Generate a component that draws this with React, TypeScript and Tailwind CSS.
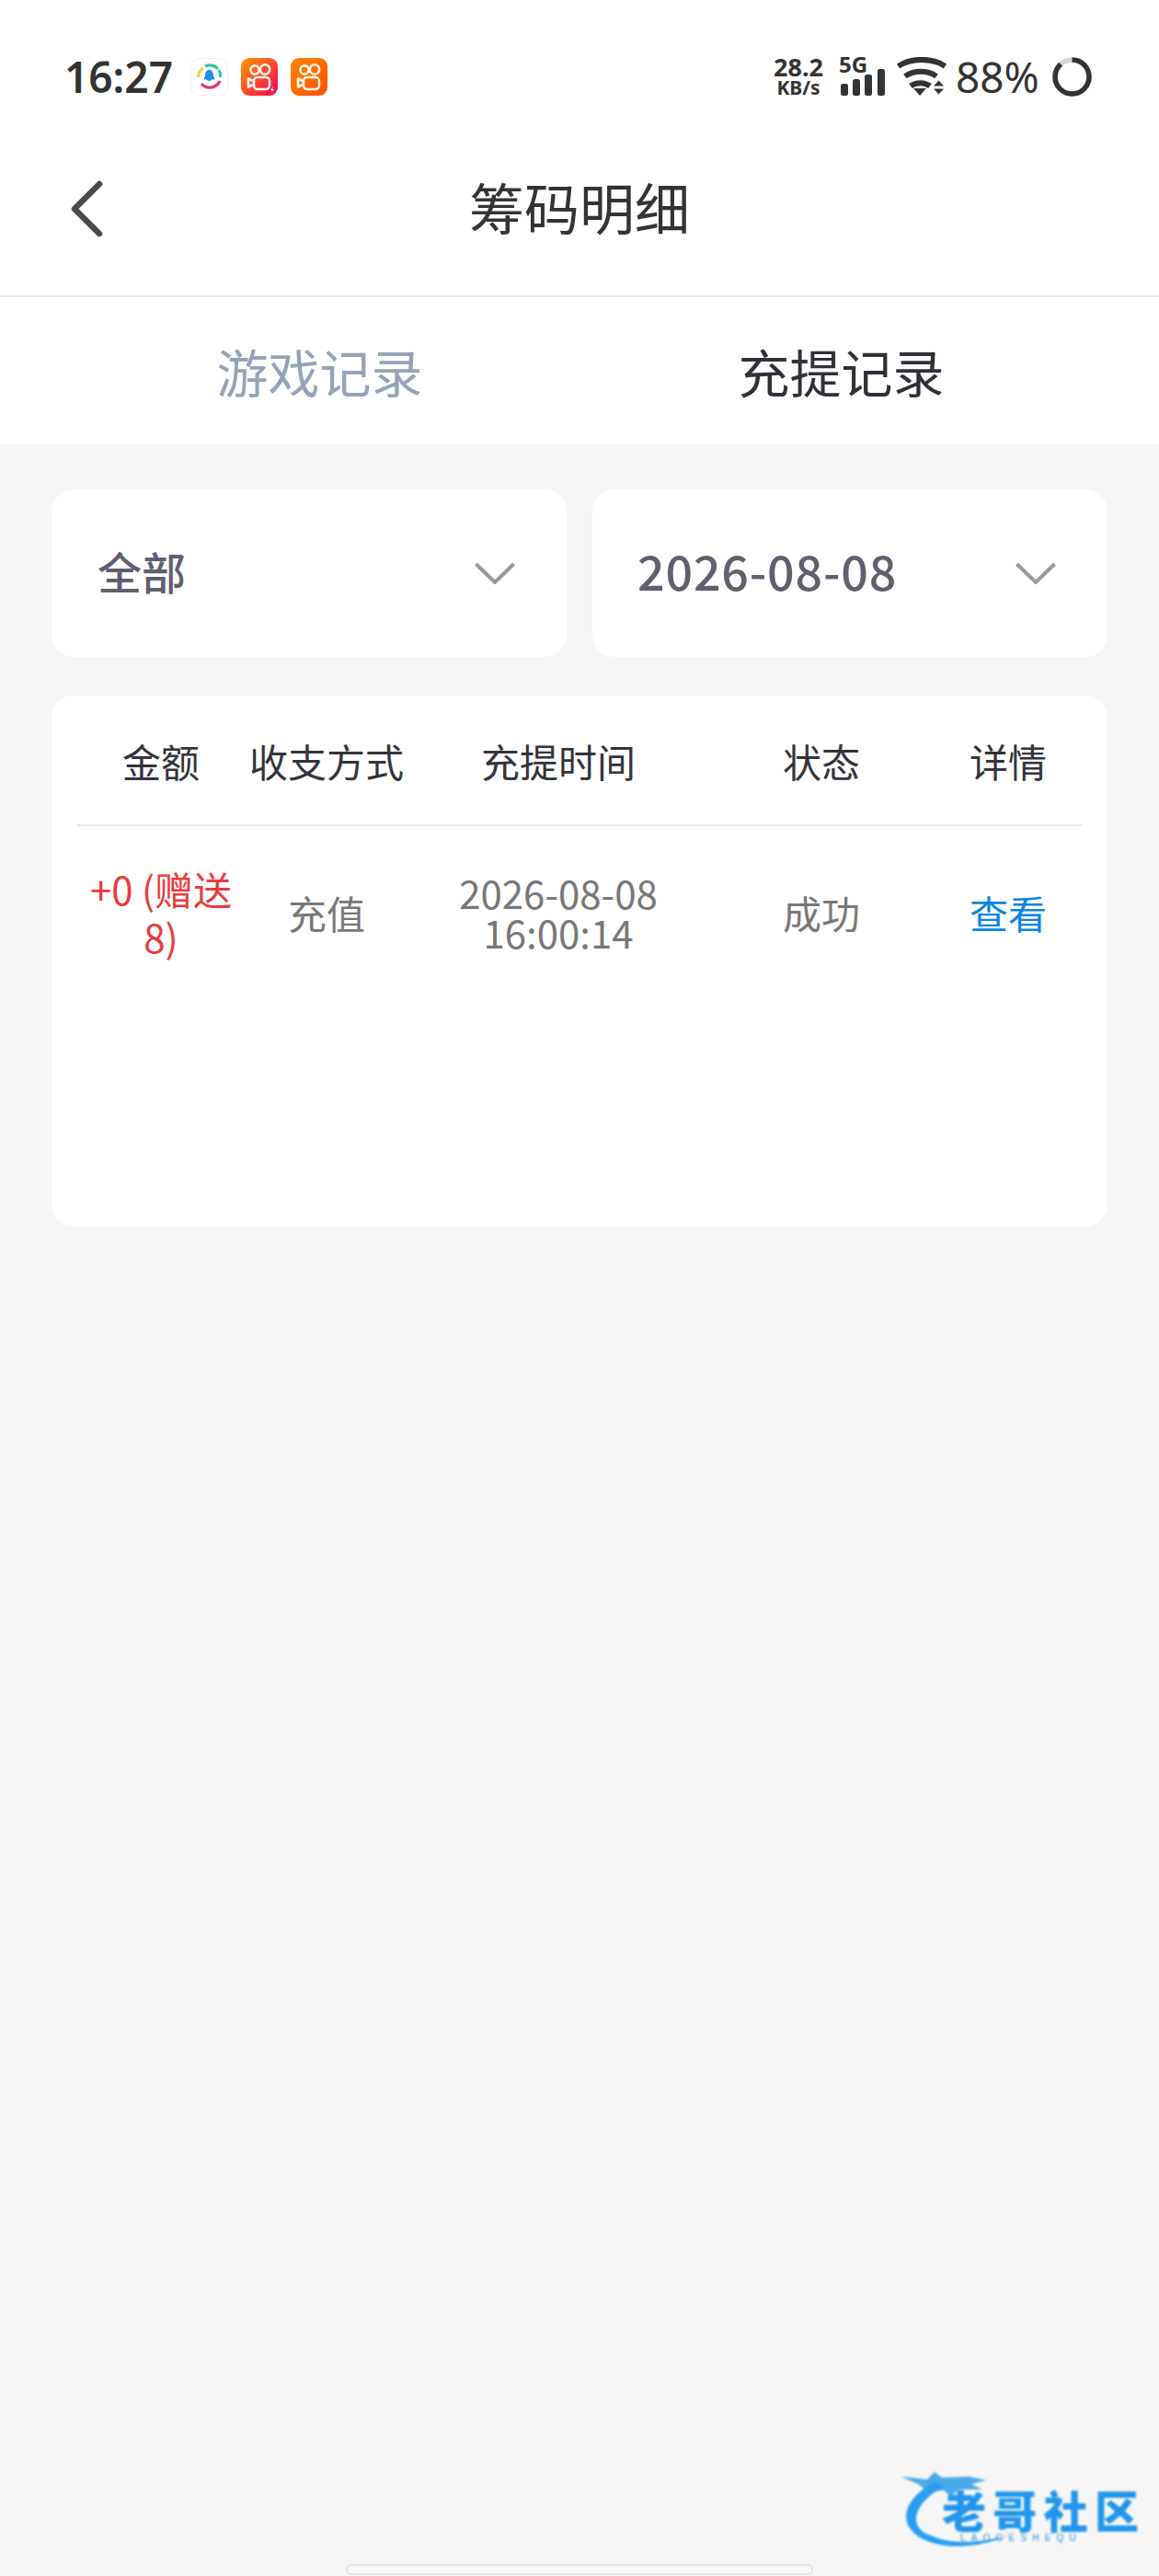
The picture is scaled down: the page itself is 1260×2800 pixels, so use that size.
const cjk = "font-['Noto_Sans_CJK_SC','Noto_Sans',sans-serif]";

function KuaishouIcon({ id, from, to, bolt }: { id: string; from: string; to: string; bolt?: boolean }) {
  return (
    <svg width="40" height="41" viewBox="0 0 40 41">
      <defs>
        <linearGradient id={id} x1="0" y1="0" x2="1" y2="1">
          <stop offset="0" stopColor={from} />
          <stop offset="1" stopColor={to} />
        </linearGradient>
      </defs>
      <rect width="40" height="41" rx="9" fill={`url(#${id})`} />
      <g fill="none" stroke="#fff6ea" strokeWidth="2.6">
        <circle cx="15" cy="13" r="4.6" />
        <circle cx="26" cy="12.5" r="5.2" />
        <rect x="14" y="21" width="17" height="13" rx="4" />
        <path d="M13 25l-5-2.5v9l5-2.5" strokeLinejoin="round" />
      </g>
      {bolt && <path d="M35 31l-3 4h2l-1 3 3-4h-2z" fill="#fff" />}
    </svg>
  );
}

function QQIcon() {
  return (
    <svg width="41" height="41" viewBox="0 0 41 41">
      <rect x="0.5" y="0.5" width="40" height="40" rx="9" fill="#fff" stroke="#f0f0f0" />
      <g fill="none" strokeWidth="3.2">
        <path d="M8.5 21a12 12 0 0 1 5.5-10" stroke="#f2cf4a" />
        <path d="M16 9a12 12 0 0 1 14 3" stroke="#33c4a8" />
        <path d="M31 13a12 12 0 0 1 1.5 8" stroke="#35c2c0" />
        <path d="M32 25a12 12 0 0 1-20 3" stroke="#e8366f" />
      </g>
      <path d="M20.5 13c3 0 4.400 2.500 4.400 5.500 0 1.500 1.600 3.500 1.300 5-.8.600-1.800-.5-2-.8-.4 1.200-2 2.300-3.700 2.300s-3.300-1.100-3.700-2.300c-.2.300-1.200 1.400-2 .8-.3-1.500 1.300-3.500 1.300-5 0-3 1.400-5.500 4.400-5.500z" fill="#1f8af0" />
    </svg>
  );
}

function SignalIcon() {
  return (
    <svg width="48" height="29" viewBox="0 0 48 29" fill="#333">
      <rect x="0" y="16" width="8" height="13" rx="2.500" />
      <rect x="13" y="11" width="8" height="18" rx="2.500" />
      <rect x="26" y="6" width="8" height="23" rx="2.500" />
      <rect x="40" y="0" width="8" height="29" rx="2.500" />
    </svg>
  );
}

function WifiIcon() {
  return (
    <svg width="54" height="42" viewBox="0 0 54 42">
      <g fill="none" stroke="#333" strokeWidth="6">
        <path d="M1.500 10C15 0.500 39 0.500 52.500 10" />
        <path d="M9 21C18 14 34 14 43 21" />
        <path d="M15 31.500C21 27 30 27 36 31.500" />
      </g>
      <path d="M18 34h14l-7 8z" fill="#333" />
      <path d="M40 31.500l5.500-6 5.500 6zM40 34.500h11l-5.500 6z" fill="#333" />
    </svg>
  );
}

function RingIcon() {
  return (
    <svg width="43" height="43" viewBox="0 0 43 43" fill="none" strokeWidth="5.500">
      <circle cx="21.500" cy="21.500" r="18.500" stroke="#d6d6d6" />
      <circle cx="21.500" cy="21.500" r="18.500" stroke="#333" strokeDasharray="102 116.300" transform="rotate(-90 21.500 21.500)" />
    </svg>
  );
}

function BackIcon() {
  return (
    <svg width="40" height="66" viewBox="0 0 40 66" fill="none" stroke="#4a4a4a" strokeWidth="6.500" strokeLinecap="round" strokeLinejoin="round">
      <path d="M33 6L6 33L33 60" />
    </svg>
  );
}

function SelectChevron() {
  return (
    <svg width="44" height="24" viewBox="0 0 44 24" fill="none" stroke="#999" strokeWidth="4">
      <path d="M1.500 2L22 22L42.500 2" />
    </svg>
  );
}

function Watermark() {
  return (
    <div className="absolute left-[978px] top-[2684px] w-[262px] h-[92px] blur-[0.8px]">
      <svg width="262" height="92" viewBox="0 0 262 92" className="absolute left-0 top-0">
        <path d="M38 14C6 30-8 62 30 78c26 10 60 6 88-6-30 8-62 10-84 0C8 64 14 36 50 18z" fill="#2a9ff0" />
        <path d="M2 8l28 3 8-8 8 6 30-1 18 4-16 4 12 6-26 0-8 8-8-7-18 1-10-8z" fill="#2c9ce8" opacity="0.85" />
      </svg>
      <div className={`absolute left-[46px] top-[18px] w-[214px] flex justify-between text-[48px] leading-[50px] font-black text-[#2196ec] ${cjk}`}>
        <span>老</span>
        <span>哥</span>
        <span>社</span>
        <span>区</span>
      </div>
      <div className="absolute left-[66px] top-[69px] font-['Liberation_Sans',sans-serif] text-[10px] leading-[12px] tracking-[6.200px] text-[#2b8fdc]">
        LAOGESHEQU
      </div>
    </div>
  );
}

export default function App() {
  return (
    <div className={`relative w-[1260px] h-[2800px] bg-[#f6f6f6] overflow-hidden ${cjk}`}>
      {/* Status bar + nav */}
      <div className="bg-white border-b-2 border-[#e8e8e8]">
        <div className="h-[166px] flex items-center justify-between pl-[70px] pr-[73px]">
          <div className="flex items-center">
            <span className="font-['Noto_Sans',sans-serif] text-[46px] font-semibold text-[#333] leading-none w-[137px]">16:27</span>
            <div className="flex items-center gap-[14px]">
              <QQIcon />
              <KuaishouIcon id="ks1" from="#ff9a00" to="#f5005a" bolt />
              <KuaishouIcon id="ks2" from="#ff8a00" to="#f94f00" />
            </div>
          </div>
          <div className="flex items-center">
            <div className="flex flex-col items-center font-['Noto_Sans',sans-serif] font-bold text-[#333] mr-[19px] w-[54px]">
              <span className="text-[27px] leading-[25px]">28.2</span>
              <span className="text-[21px] leading-[21px] whitespace-nowrap">KB/s</span>
            </div>
            <div className="flex flex-col items-start mr-[13px]">
              <span className="font-['Noto_Sans',sans-serif] font-bold text-[24px] leading-[16px] text-[#333] ml-[-2px] h-[13px]">5G</span>
              <SignalIcon />
            </div>
            <WifiIcon />
            <span className="font-['Noto_Sans',sans-serif] text-[46px] leading-none text-[#333] ml-[10px] mr-[15px] w-[90px] whitespace-nowrap">88%</span>
            <RingIcon />
          </div>
        </div>
        <div className="h-[122px] mb-[33px] flex items-center justify-center relative">
          <div className="absolute left-[75px] top-1/2 -translate-y-1/2">
            <BackIcon />
          </div>
          <h1 className="text-[60px] leading-none font-normal text-[#333] pb-[6px]">筹码明细</h1>
        </div>
      </div>

      {/* Tabs */}
      <div className="bg-white h-[160px] pl-[64px] pr-[62px] grid grid-cols-2 items-center text-[56px] leading-none">
        <div className="text-center text-[#94a3b8]">游戏记录</div>
        <div className="text-center text-[#303038]">充提记录</div>
      </div>

      {/* Filters */}
      <div className="px-[56px] pt-[49px]">
        <div className="grid grid-cols-2 gap-[28px]">
          <div className="h-[182px] bg-white rounded-[24px] pl-[50px] pr-[56px] flex items-center justify-between text-[#5f5f6e]">
            <span className="text-[48px] font-medium pb-[6px]">全部</span>
            <SelectChevron />
          </div>
          <div className="h-[182px] bg-white rounded-[24px] pl-[49px] pr-[56px] flex items-center justify-between text-[#5f5f6e]">
            <span className="text-[52px] font-medium tracking-[0.800px] pb-[6px]">2026-08-08</span>
            <SelectChevron />
          </div>
        </div>

        {/* Records */}
        <div className="mt-[42px] h-[577px] bg-white rounded-[24px] px-[28px]">
          <div className="h-[142px] border-b-2 border-[#e5e5ea] grid grid-cols-[182px_178px_326px_246px_160px] items-center text-center text-[42px] text-[#33333b]">
            <div>金额</div>
            <div className="whitespace-nowrap">收支方式</div>
            <div>充提时间</div>
            <div>状态</div>
            <div>详情</div>
          </div>
          <div className="h-[192px] pb-[6px] grid grid-cols-[182px_178px_326px_246px_160px] items-center text-center text-[42px] text-[#777]">
            <div className="text-[#ea3b3b] leading-[52px] px-[8px] pt-[2px]">+0 (赠送8)</div>
            <div>充值</div>
            <div>
              <div className="leading-[43px]">2026-08-08</div>
              <div className="leading-[43px]">16:00:14</div>
            </div>
            <div>成功</div>
            <div className="text-[#0a84e0]">查看</div>
          </div>
        </div>
      </div>

      <Watermark />

      {/* Gesture bar */}
      <div className="absolute left-[376px] top-[2787px] w-[508px] h-[12px] rounded-full bg-[#f8f8f8] border-2 border-[#e4e4e4]" />
    </div>
  );
}
